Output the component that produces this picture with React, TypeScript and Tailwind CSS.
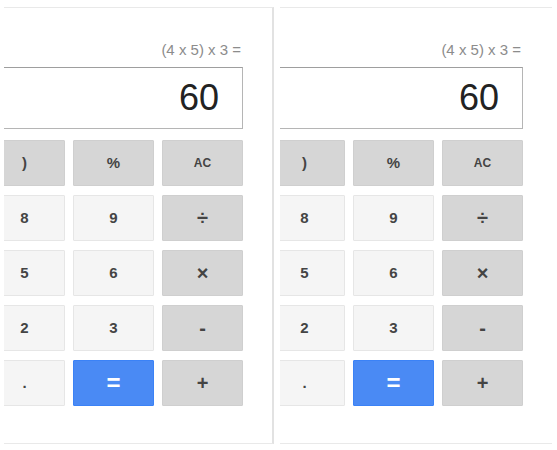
import React from "react";

type Key = { label: string; kind: "num" | "op" | "eq"; small?: boolean };

// first column stays hidden behind the card edge, so it carries no label
const rows: Key[][] = [
  [
    { label: "", kind: "op" },
    { label: ")", kind: "op" },
    { label: "%", kind: "op" },
    { label: "AC", kind: "op", small: true },
  ],
  [
    { label: "", kind: "num" },
    { label: "8", kind: "num" },
    { label: "9", kind: "num" },
    { label: "÷", kind: "op" },
  ],
  [
    { label: "", kind: "num" },
    { label: "5", kind: "num" },
    { label: "6", kind: "num" },
    { label: "×", kind: "op" },
  ],
  [
    { label: "", kind: "num" },
    { label: "2", kind: "num" },
    { label: "3", kind: "num" },
    { label: "-", kind: "op" },
  ],
  [
    { label: "", kind: "num" },
    { label: ".", kind: "num" },
    { label: "=", kind: "eq" },
    { label: "+", kind: "op" },
  ],
];

function CalcKey({ k }: { k: Key }) {
  const base =
    "flex h-[46px] w-[81px] items-center justify-center rounded-[1px] border font-bold";
  if (k.kind === "eq") {
    return (
      <div className={`${base} border-[#3b82f6] bg-[#4a8af4] text-[24px] text-white`}>
        {k.label}
      </div>
    );
  }
  if (k.kind === "op") {
    return (
      <div
        className={`${base} border-[#cfcfcf] bg-[#d6d6d6] text-[#444] ${
          k.small ? "text-[12px]" : k.label.length === 1 && "×÷+-".includes(k.label) ? "text-[20px]" : "text-[15px]"
        }`}
      >
        {k.label}
      </div>
    );
  }
  return (
    <div className={`${base} border-[#e6e6e6] bg-[#f5f5f5] text-[15px] text-[#444]`}>
      {k.label}
    </div>
  );
}

function Calculator({ className }: { className: string }) {
  return (
    <div className={`mt-[7px] flex h-[437px] justify-end overflow-hidden border-y border-[#e9e9e9] bg-white ${className}`}>
      <div className="flex w-[348px] shrink-0 flex-col items-end pr-[29px] pt-[33px]">
        <div className="h-[18px] pr-[2px] text-[15px] leading-[18px] text-[#8c8c8c]">(4 x 5) x 3 =</div>
        <div className="mt-[8px] flex h-[62px] w-full items-center justify-end border border-[#b5b5b5] border-t-[#9e9e9e] bg-white pr-[23px] text-[36px] text-[#222]">
          60
        </div>
        <div className="mt-[11px] flex flex-col gap-[9px]">
          {rows.map((r, i) => (
            <div key={i} className="flex gap-[8px]">
              {r.map((k, j) => (
                <CalcKey key={j} k={k} />
              ))}
            </div>
          ))}
        </div>
      </div>
    </div>
  );
}

export default function App() {
  return (
    <div
      className="flex h-[450px] w-[557px] bg-white"
      style={{ fontFamily: '"Liberation Sans", Arial, sans-serif' }}
    >
      <Calculator className="ml-[4px] w-[270px] border-r-2 border-r-[#e2e2e2]" />
      <Calculator className="ml-[6px] w-[272px]" />
    </div>
  );
}
